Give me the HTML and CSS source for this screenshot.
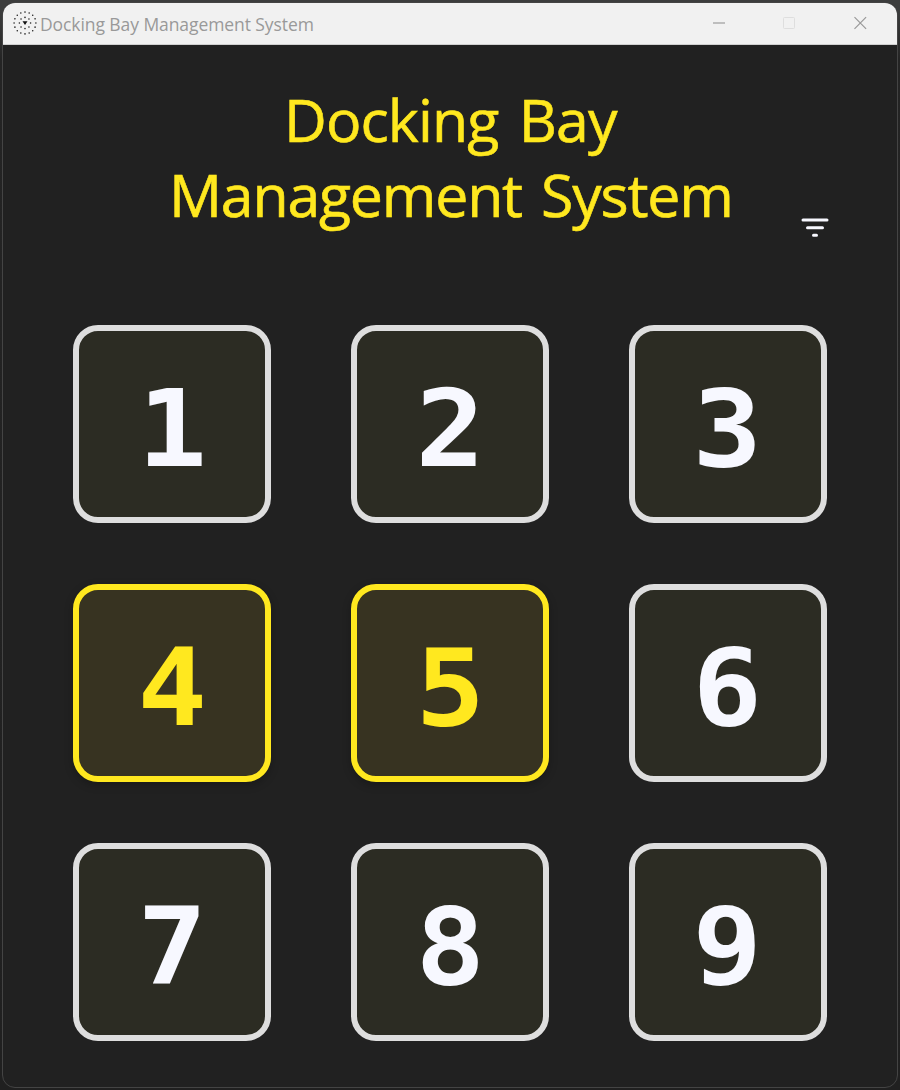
FILE: index.html
```html
<!DOCTYPE html>
<html lang="en">
<head>
<meta charset="utf-8">
<title>Docking Bay Management System</title>
<link rel="stylesheet" href="styles.css">
</head>
<body>
<div class="window">
  <header class="titlebar">
    <svg class="app-icon" width="24" height="24" viewBox="0 0 24 24" fill="none" stroke="#222" stroke-width="1.6" stroke-linecap="round">
      <circle cx="12" cy="12" r="10.9" pathLength="160" stroke-dasharray="0 10"/>
      <circle cx="12" cy="12" r="5.6" pathLength="80" stroke-dasharray="0 10"/>
      <path d="M9.5 10.300h5L12 14z" fill="#111" stroke="none"/>
    </svg>
    <span class="caption">Docking Bay Management System</span>
    <svg class="controls" width="156" height="16" viewBox="0 0 156 16" fill="none">
      <path d="M1 8h12" stroke="#adadad" stroke-width="1.7"/>
      <rect x="71.5" y="2.5" width="11" height="11" rx="1" stroke="#dedede"/>
      <path d="M142.5 2.2l11.6 11.6M154.100 2.200L142.500 13.800" stroke="#999" stroke-width="1.2"/>
    </svg>
  </header>
  <main class="content">
    <div class="heading">
      <h1 class="title"><span class="line line-first">Docking Bay</span><span class="line line-second">Management System</span></h1>
      <svg class="filter" width="28" height="20" viewBox="0 0 28 20" stroke="#f7f8ff" stroke-width="3" stroke-linecap="round">
        <path d="M2 2h24M6.500 9.700h15M12.500 17.300h3"/>
      </svg>
    </div>
    <div class="bays">
      <button class="bay"><span class="digit">1</span></button>
      <button class="bay"><span class="digit">2</span></button>
      <button class="bay"><span class="digit">3</span></button>
      <button class="bay active"><span class="digit">4</span></button>
      <button class="bay active"><span class="digit">5</span></button>
      <button class="bay"><span class="digit">6</span></button>
      <button class="bay"><span class="digit">7</span></button>
      <button class="bay"><span class="digit">8</span></button>
      <button class="bay"><span class="digit">9</span></button>
    </div>
  </main>
</div>
</body>
</html>
```
FILE: styles.css
```css
* { box-sizing: border-box; }
body {
  margin: 0;
  height: 1090px;
  padding: 2px;
  overflow: hidden;
  background: linear-gradient(#3c3d3d 0, #3c3d3d 10px, #242424 60px, #202020);
}
.window {
  height: 1086px;
  border: 1px solid #444;
  border-radius: 13px;
  background: #212121;
  overflow: hidden;
}
.titlebar {
  display: flex;
  align-items: center;
  height: 42px;
  padding: 0 29px 1px 10px;
  background: #f1f1f1;
  border-bottom: 1px solid #d0d0d0;
}
.caption {
  margin: 1px 0 0 3px;
  font: 17.500px "Open Sans", sans-serif;
  letter-spacing: -.08px;
  color: #999;
}
.controls { margin-left: auto; }
.heading {
  display: flex;
  justify-content: flex-end;
  padding: 37px 68px 0 0;
  height: 280px;
}
.title {
  margin: 0 70px 0 0;
  width: 562px;
  font: 400 59px/75px "Open Sans", sans-serif;
  color: #ffe81f;
  -webkit-text-stroke: .6px #ffe81f;
  white-space: nowrap;
}
.line { display: block; }
.line-first {
  margin-left: 115px;
  letter-spacing: -.9px;
  word-spacing: 6px;
}
.line-second {
  margin-left: 0;
  letter-spacing: -1.200px;
  word-spacing: 5px;
}
.filter { margin-top: 136px; }
.bays {
  display: grid;
  grid-template-columns: repeat(3, 198px);
  grid-auto-rows: 198px;
  gap: 61px 79.750px;
  padding-left: 70px;
}
.bay {
  display: flex;
  align-items: center;
  justify-content: center;
  padding: 10px 0 0;
  border: 6px solid #dedede;
  border-radius: 25px;
  background: #2c2c23;
  color: #f7f8ff;
  font: 700 107px/1 "DejaVu Sans Mono", monospace;
}
.digit { transform: scaleX(1.080); }
.active {
  border-color: #ffe81f;
  background: #373321;
  color: #ffe81f;
  box-shadow: 0 3px 8px rgba(0, 0, 0, .25);
}
```
